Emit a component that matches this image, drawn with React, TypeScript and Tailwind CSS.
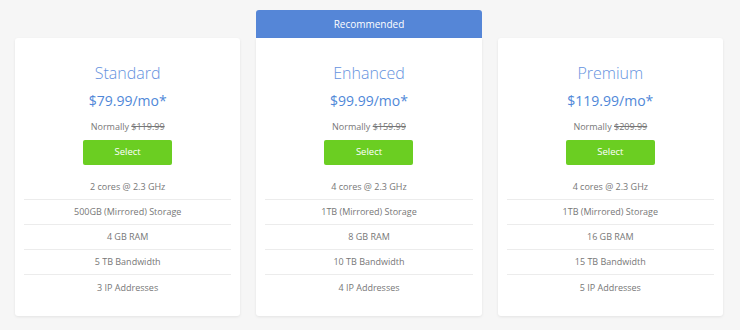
const plans = [
  {
    name: "Standard",
    price: "$79.99/mo*",
    normal: "$119.99",
    features: ["2 cores @ 2.3 GHz", "500GB (Mirrored) Storage", "4 GB RAM", "5 TB Bandwidth", "3 IP Addresses"],
  },
  {
    name: "Enhanced",
    price: "$99.99/mo*",
    normal: "$159.99",
    recommended: true,
    features: ["4 cores @ 2.3 GHz", "1TB (Mirrored) Storage", "8 GB RAM", "10 TB Bandwidth", "4 IP Addresses"],
  },
  {
    name: "Premium",
    price: "$119.99/mo*",
    normal: "$209.99",
    features: ["4 cores @ 2.3 GHz", "1TB (Mirrored) Storage", "16 GB RAM", "15 TB Bandwidth", "5 IP Addresses"],
  },
]

export default function App() {
  return (
    <div
      className="w-[740px] h-[330px] bg-[#f6f6f6] flex gap-4 pl-[15px] pr-[17px] pt-[10px]"
      style={{ fontFamily: '"Open Sans", "Liberation Sans", sans-serif' }}
    >
      {plans.map((p) => (
        <div key={p.name} className="flex-1 flex flex-col">
          {p.recommended ? (
            <div className="h-[28px] bg-[#5586d7] rounded-t-[3px] flex items-center justify-center text-white text-[10px]">
              Recommended
            </div>
          ) : (
            <div className="h-[28px]" />
          )}
          <div
            className={`h-[278px] bg-white shadow-[0_1px_3px_rgba(0,0,0,0.08)] flex flex-col items-center pt-[23px] pb-4 px-[9px] ${
              p.recommended ? "rounded-b-[3px]" : "rounded-[3px]"
            }`}
          >
            <h2 className="text-[16px] leading-6 font-light text-[#6592de]">{p.name}</h2>
            <div className="mt-[6px] text-[14px] leading-5 text-[#5088d8]">{p.price}</div>
            <div className="mt-2 text-[9px] leading-4 text-[#777]">
              Normally <span className="line-through">{p.normal}</span>
            </div>
            <button className="mt-[5px] w-[89px] h-[25px] bg-[#6bce22] rounded-[2px] text-white text-[9.5px]">
              Select
            </button>
            <ul className="mt-[10px] w-full">
              {p.features.map((f, i) => (
                <li
                  key={f}
                  className={`h-[25px] flex items-center justify-center text-[9px] text-[#777] ${
                    i < p.features.length - 1 ? "border-b border-[#ececec]" : ""
                  }`}
                >
                  {f}
                </li>
              ))}
            </ul>
          </div>
        </div>
      ))}
    </div>
  )
}
